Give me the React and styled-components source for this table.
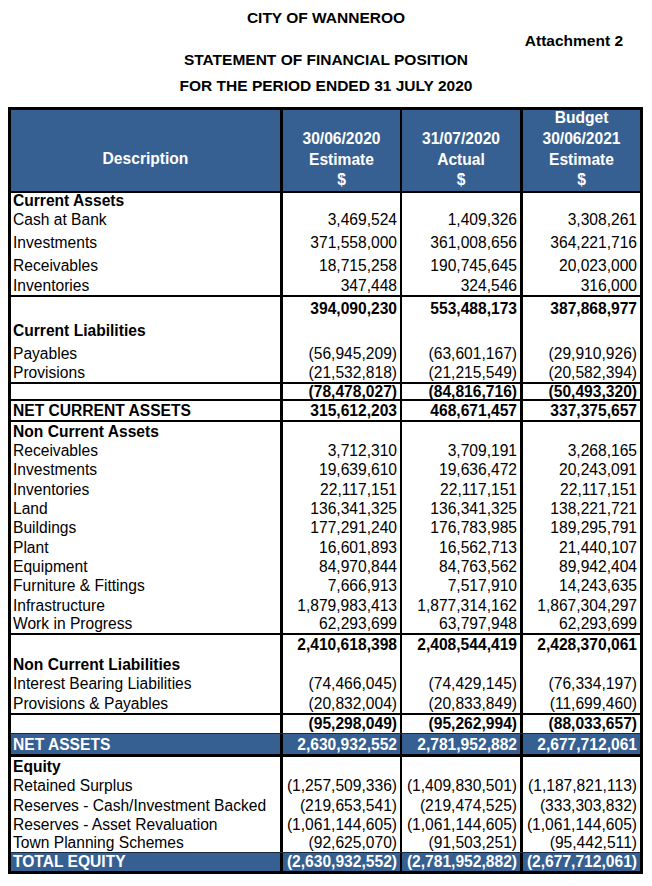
import React from 'react';
import styled, { createGlobalStyle } from 'styled-components';

const blue = '#376092';

const GlobalStyle = createGlobalStyle`
  html, body {
    margin: 0;
    padding: 0;
    background: #fff;
  }
  body {
    font-family: "Liberation Sans", Arial, sans-serif;
    color: #000;
  }
`;

const columns = [
  ['30/06/2020', 'Estimate', '$'],
  ['31/07/2020', 'Actual', '$'],
  ['Budget', '30/06/2021', 'Estimate', '$'],
];

// h = content height of the row, line = top rule above the row
const rows = [
  { label: 'Current Assets', bold: true, h: 17 },
  { label: 'Cash at Bank', values: ['3,469,524', '1,409,326', '3,308,261'], h: 19 },
  { label: 'Investments', values: ['371,558,000', '361,008,656', '364,221,716'], h: 23 },
  { label: 'Receivables', values: ['18,715,258', '190,745,645', '20,023,000'], h: 23 },
  { label: 'Inventories', values: ['347,448', '324,546', '316,000'], h: 20 },
  { values: ['394,090,230', '553,488,173', '387,868,977'], bold: true, line: 2, h: 21 },
  { label: 'Current Liabilities', bold: true, h: 22 },
  { label: 'Payables', values: ['(56,945,209)', '(63,601,167)', '(29,910,926)'], h: 23 },
  { label: 'Provisions', values: ['(21,532,818)', '(21,215,549)', '(20,582,394)'], h: 19 },
  { values: ['(78,478,027)', '(84,816,716)', '(50,493,320)'], bold: true, line: 2, h: 15, mid: true },
  { label: 'NET CURRENT ASSETS', values: ['315,612,203', '468,671,457', '337,375,657'], bold: true, line: 2, h: 19 },
  { label: 'Non Current Assets', bold: true, line: 2, h: 19 },
  { label: 'Receivables', values: ['3,712,310', '3,709,191', '3,268,165'], h: 19 },
  { label: 'Investments', values: ['19,639,610', '19,636,472', '20,243,091'], h: 19 },
  { label: 'Inventories', values: ['22,117,151', '22,117,151', '22,117,151'], h: 20 },
  { label: 'Land', values: ['136,341,325', '136,341,325', '138,221,721'], h: 19 },
  { label: 'Buildings', values: ['177,291,240', '176,783,985', '189,295,791'], h: 19 },
  { label: 'Plant', values: ['16,601,893', '16,562,713', '21,440,107'], h: 20 },
  { label: 'Equipment', values: ['84,970,844', '84,763,562', '89,942,404'], h: 19 },
  { label: 'Furniture & Fittings', values: ['7,666,913', '7,517,910', '14,243,635'], h: 19 },
  { label: 'Infrastructure', values: ['1,879,983,413', '1,877,314,162', '1,867,304,297'], h: 20 },
  { label: 'Work in Progress', values: ['62,293,699', '63,797,948', '62,293,699'], h: 18 },
  { values: ['2,410,618,398', '2,408,544,419', '2,428,370,061'], bold: true, line: 2, h: 19 },
  { label: 'Non Current Liabilities', bold: true, h: 20 },
  { label: 'Interest Bearing Liabilities', values: ['(74,466,045)', '(74,429,145)', '(76,334,197)'], h: 19 },
  { label: 'Provisions & Payables', values: ['(20,832,004)', '(20,833,849)', '(11,699,460)'], h: 20 },
  { values: ['(95,298,049)', '(95,262,994)', '(88,033,657)'], bold: true, line: 2, h: 18 },
  { label: 'NET ASSETS', values: ['2,630,932,552', '2,781,952,882', '2,677,712,061'], bold: true, blue: true, line: 1, h: 20 },
  { label: 'Equity', bold: true, line: 3, h: 19 },
  { label: 'Retained Surplus', values: ['(1,257,509,336)', '(1,409,830,501)', '(1,187,821,113)'], h: 19 },
  { label: 'Reserves - Cash/Investment Backed', values: ['(219,653,541)', '(219,474,525)', '(333,303,832)'], h: 20 },
  { label: 'Reserves - Asset Revaluation', values: ['(1,061,144,605)', '(1,061,144,605)', '(1,061,144,605)'], h: 19 },
  { label: 'Town Planning Schemes', values: ['(92,625,070)', '(91,503,251)', '(95,442,511)'], h: 18 },
  { label: 'TOTAL EQUITY', values: ['(2,630,932,552)', '(2,781,952,882)', '(2,677,712,061)'], bold: true, blue: true, line: 1, h: 18 },
];

const App = () => {
  return (
    <>
      <GlobalStyle />
      <Page>
        <Title>CITY OF WANNEROO</Title>
        <Attachment>Attachment 2</Attachment>
        <Title $gap={0}>STATEMENT OF FINANCIAL POSITION</Title>
        <Title $gap={6}>FOR THE PERIOD ENDED 31 JULY 2020</Title>
        <Sheet>
          <HeadRow>
            <HeadCell $padBottom={21}>Description</HeadCell>
            {columns.map((lines, i) => (
              <HeadCell key={i}>
                {lines.map((l) => (
                  <span key={l}>{l}</span>
                ))}
              </HeadCell>
            ))}
          </HeadRow>
          {rows.map((r, i) => (
            <Row key={i} $h={r.h} $line={r.line || 0} $blue={r.blue}>
              <LabelCell $bold={r.bold} $blue={r.blue} $mid={r.mid}>{r.label}</LabelCell>
              {[0, 1, 2].map((c) => (
                <NumCell key={c} $bold={r.bold} $blue={r.blue} $mid={r.mid}>
                  {r.values ? r.values[c] : ''}
                </NumCell>
              ))}
            </Row>
          ))}
        </Sheet>
      </Page>
    </>
  );
};

const Page = styled.div`
  width: 652px;
  padding-top: 8px;
  display: flex;
  flex-direction: column;
`;

const Title = styled.div`
  font-size: 15.5px;
  font-weight: bold;
  line-height: 20px;
  text-align: center;
  margin-top: ${(p) => (p.$gap !== undefined ? p.$gap : 0)}px;
`;

const Attachment = styled.div`
  font-size: 15.5px;
  font-weight: bold;
  line-height: 18px;
  text-align: right;
  margin-top: 4px;
  padding-right: 29px;
`;

const Sheet = styled.div`
  box-sizing: border-box;
  width: 635px;
  margin: 11px 0 0 8px;
  border: 3px solid #000;
  font-size: 15.6px;
`;

const gridCols = '272px 119px 121px 117px';

const HeadRow = styled.div`
  display: grid;
  grid-template-columns: ${gridCols};
  grid-template-rows: 100%;
  height: 81px;
  border-bottom: 2px solid #000;
`;

const HeadCell = styled.div`
  box-sizing: border-box;
  min-height: 0;
  background: ${blue};
  color: #fff;
  font-weight: bold;
  line-height: 20.7px;
  display: flex;
  flex-direction: column;
  justify-content: flex-end;
  align-items: center;
  padding-bottom: ${(p) => p.$padBottom || 0}px;
  border-right: 3px solid #000;

  &:nth-child(2) {
    border-right-width: 2px;
  }
  &:last-child {
    border-right: none;
  }
`;

const Row = styled.div`
  display: grid;
  grid-template-columns: ${gridCols};
  grid-template-rows: 100%;
  height: ${(p) => p.$h}px;
  border-top: ${(p) => p.$line}px solid ${(p) => (p.$line === 1 ? '#1b2a40' : '#000')};
  background: ${(p) => (p.$blue ? blue : '#fff')};
`;

const Cell = styled.div`
  box-sizing: border-box;
  min-height: 0;
  display: flex;
  align-items: ${(p) => (p.$mid ? 'center' : 'flex-end')};
  line-height: ${(p) => (p.$mid ? 15 : 19)}px;
  white-space: nowrap;
  font-weight: ${(p) => (p.$bold ? 'bold' : 'normal')};
  color: ${(p) => (p.$blue ? '#fff' : '#000')};
  border-right: 3px solid #000;

  &:nth-child(2) {
    border-right-width: 2px;
  }
  &:last-child {
    border-right: none;
  }
`;

const LabelCell = styled(Cell)`
  padding-left: 2px;
`;

const NumCell = styled(Cell)`
  justify-content: flex-end;
  padding-right: 3px;
`;

export default App;
